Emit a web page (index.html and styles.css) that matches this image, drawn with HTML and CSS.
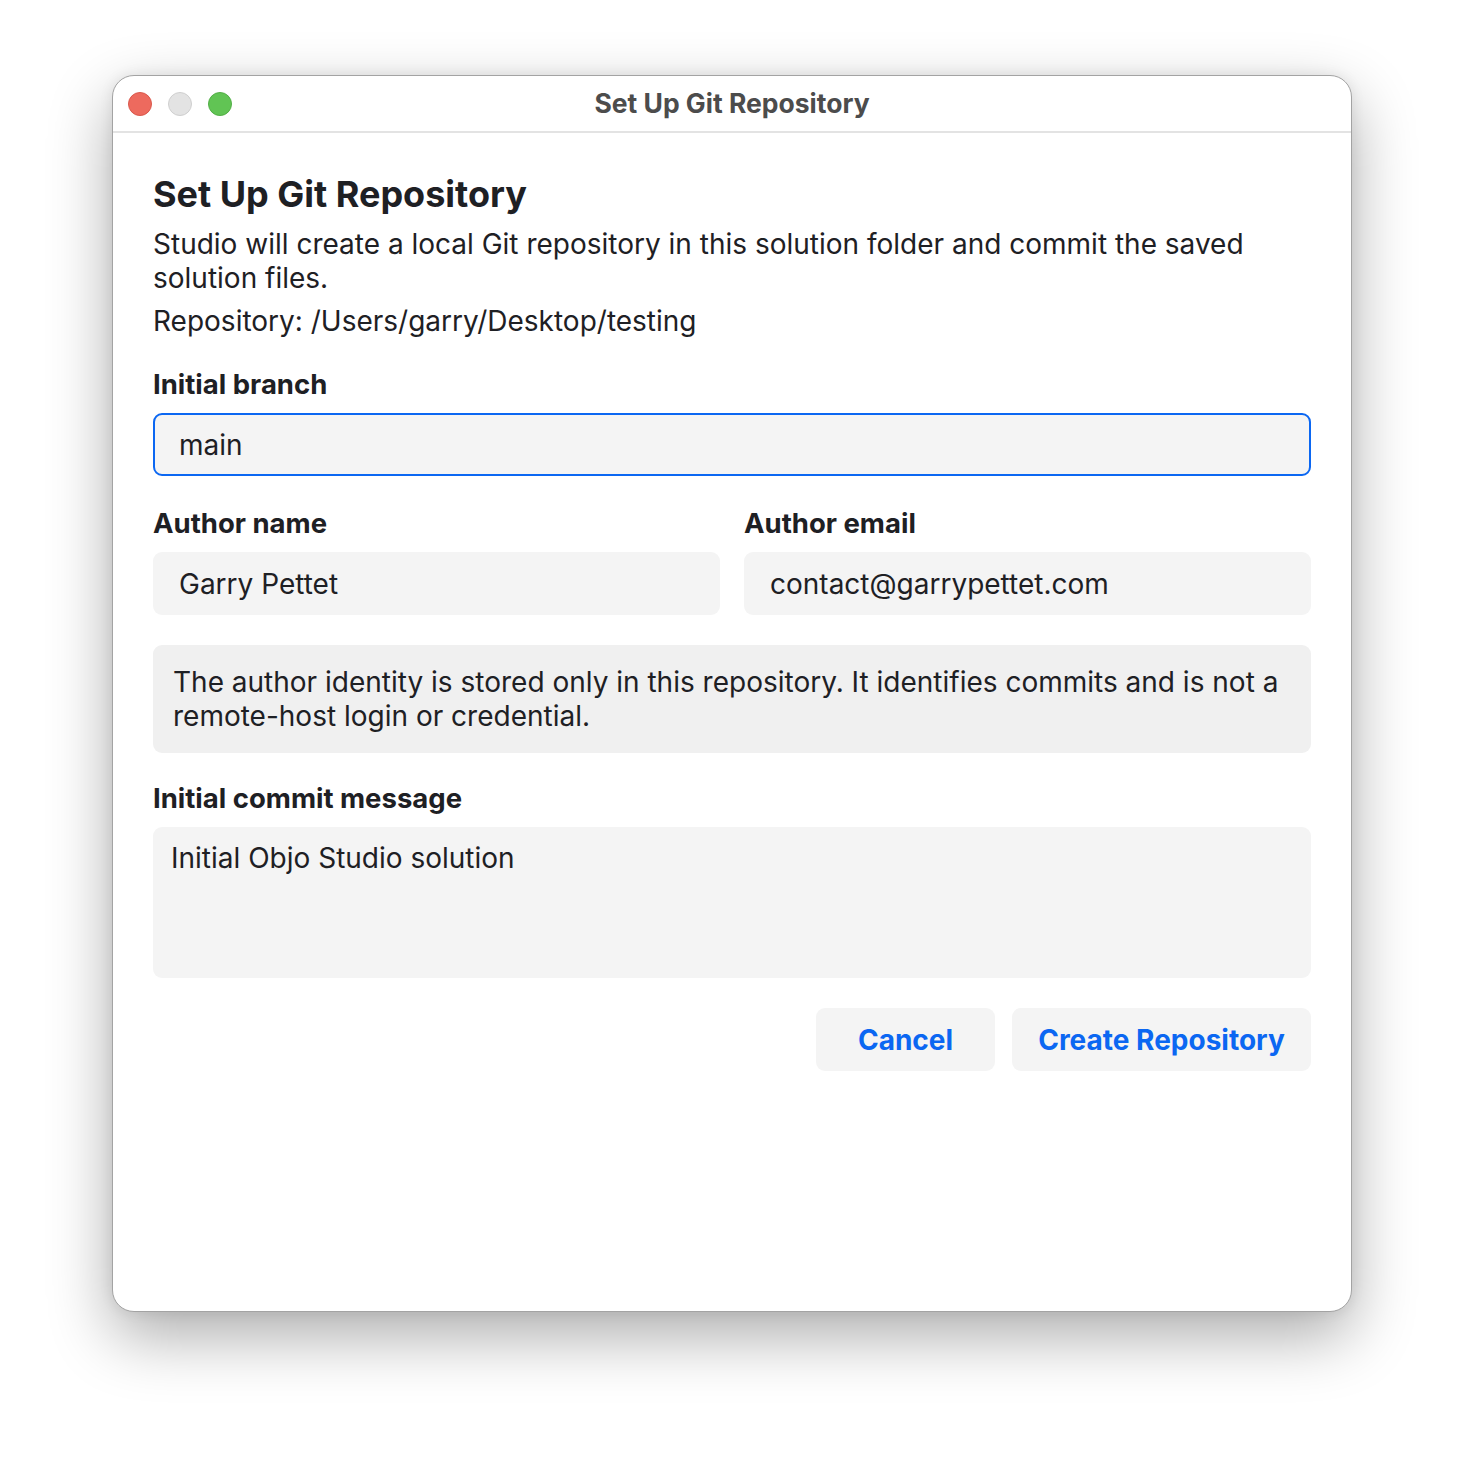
FILE: index.html
```html
<!DOCTYPE html>
<html lang="en">
<head>
<meta charset="utf-8">
<title>Set Up Git Repository</title>
<link rel="stylesheet" href="styles.css">
</head>
<body>
<div class="window">
  <div class="titlebar">
    <div class="lights">
      <span class="light red"></span>
      <span class="light gray"></span>
      <span class="light green"></span>
    </div>
    <div class="title">Set Up Git Repository</div>
  </div>
  <div class="content">
    <h1 class="heading">Set Up Git Repository</h1>
    <p class="desc">Studio will create a local Git repository in this solution folder and commit the saved solution files.</p>
    <p class="repo">Repository: /Users/garry/Desktop/testing</p>

    <div class="field field-branch">
      <label class="label">Initial branch</label>
      <div class="input focused">main</div>
    </div>

    <div class="row">
      <div class="field">
        <label class="label">Author name</label>
        <div class="input">Garry Pettet</div>
      </div>
      <div class="field">
        <label class="label">Author email</label>
        <div class="input">contact@garrypettet.com</div>
      </div>
    </div>

    <div class="note">The author identity is stored only in this repository. It identifies commits and is not a remote-host login or credential.</div>

    <div class="field">
      <label class="label">Initial commit message</label>
      <div class="textarea">Initial Objo Studio solution</div>
    </div>

    <div class="actions">
      <button class="btn btn-cancel">Cancel</button>
      <button class="btn btn-create">Create Repository</button>
    </div>
  </div>
</div>
</body>
</html>
```

FILE: styles.css
```css
html, body {
  margin: 0;
  padding: 0;
  background: #ffffff;
}

body {
  font-family: Inter, "Noto Sans", sans-serif;
  color: #1e2024;
  padding: 75px 112px 0 112px;
  height: 1460px;
  box-sizing: border-box;
  overflow: hidden;
}

.window {
  width: 1240px;
  height: 1237px;
  box-sizing: border-box;
  background: #ffffff;
  border-radius: 22px;
  border: 1px solid #a3a3a3;
  box-shadow: 0 24px 64px rgba(0, 0, 0, 0.33), 0 0 14px rgba(0, 0, 0, 0.08);
  overflow: hidden;
  display: flex;
  flex-direction: column;
}

.titlebar {
  height: 57px;
  flex: 0 0 57px;
  box-sizing: border-box;
  border-bottom: 2px solid #e3e3e3;
  display: flex;
  align-items: center;
  position: relative;
}

.lights {
  display: flex;
  gap: 16px;
  padding-left: 15px;
}

.light {
  width: 24px;
  height: 24px;
  border-radius: 50%;
  box-sizing: border-box;
}

.light.red {
  background: #ed6a5e;
  border: 1px solid #d9584c;
}

.light.gray {
  background: #e3e3e3;
  border: 1px solid #cfcfcf;
}

.light.green {
  background: #61c454;
  border: 1px solid #52ae46;
}

.title {
  position: absolute;
  left: 0;
  right: 0;
  top: 0;
  bottom: 0;
  display: flex;
  align-items: center;
  justify-content: center;
  font-weight: 700;
  font-size: 26.5px;
  color: #4c4c4c;
  pointer-events: none;
  padding-bottom: 2px;
}

.content {
  padding: 38px 40px 0 40px;
  display: flex;
  flex-direction: column;
}

.heading {
  margin: 0;
  font-size: 36px;
  font-weight: 700;
  line-height: 44px;
  color: #1e2024;
  position: relative;
  top: 1px;
}

.desc {
  margin: 12px 0 0 0;
  font-size: 28px;
  line-height: 34px;
  padding-right: 40px;
}

.repo {
  margin: 9px 0 0 0;
  font-size: 28px;
  line-height: 34px;
}

.field {
  display: flex;
  flex-direction: column;
  min-width: 0;
}

.field-branch {
  margin-top: 29px;
}

.label {
  font-size: 27.5px;
  font-weight: 700;
  line-height: 34px;
  margin-bottom: 12px;
}

.input {
  height: 63px;
  box-sizing: border-box;
  background: #f4f4f4;
  border-radius: 9px;
  border: 2px solid transparent;
  padding: 0 24px;
  display: flex;
  align-items: center;
  font-size: 28px;
}

.input.focused {
  border-color: #0b67f2;
}

.row {
  margin-top: 30px;
  display: grid;
  grid-template-columns: 1fr 1fr;
  gap: 24px;
}

.note {
  margin-top: 30px;
  background: #f0f0f0;
  border-radius: 9px;
  padding: 20px 20px 20px 20px;
  font-size: 28px;
  line-height: 34px;
  min-height: 108px;
  box-sizing: border-box;
  color: #1e2024;
}

.note + .field {
  margin-top: 28px;
}

.textarea {
  height: 151px;
  box-sizing: border-box;
  background: #f4f4f4;
  border-radius: 9px;
  padding: 14px 18px;
  font-size: 28px;
  line-height: 34px;
}

.actions {
  margin-top: 30px;
  display: flex;
  justify-content: flex-end;
  gap: 17px;
}

.btn {
  height: 63px;
  border: none;
  background: #f4f4f4;
  border-radius: 9px;
  font-family: Inter, "Noto Sans", sans-serif;
  font-weight: 700;
  font-size: 28px;
  color: #0b67f2;
  padding: 0;
  white-space: nowrap;
}

.btn-cancel {
  width: 179px;
}

.btn-create {
  width: 299px;
}
```
